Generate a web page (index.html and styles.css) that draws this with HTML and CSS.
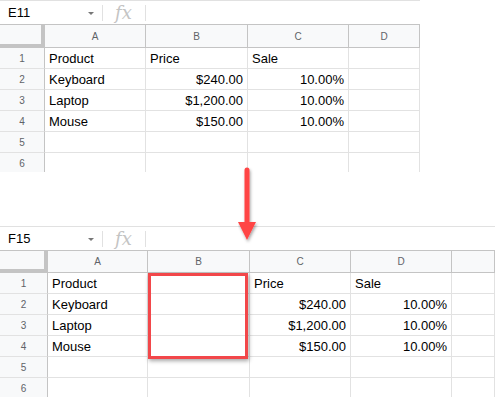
FILE: index.html
```html
<!DOCTYPE html>
<html lang="en">
<head>
    <meta charset="UTF-8">
    <meta name="viewport" content="width=device-width, initial-scale=1.0">
    <title>Insert column in Google Sheets</title>
    <link rel="stylesheet" href="styles.css">
</head>
<body>
<div class="page">
    <!-- before -->
    <div class="sheet sheet-before">
        <div class="formula-bar">
            <div class="name-box"><span>E11</span><span class="caret"></span></div>
            <div class="fx">fx</div>
            <div class="formula-input"></div>
        </div>
        <div class="grid grid-before">
            <div class="corner"></div>
            <div class="col-head">A</div>
            <div class="col-head">B</div>
            <div class="col-head">C</div>
            <div class="col-head">D</div>

            <div class="row-head">1</div>
            <div class="cell">Product</div>
            <div class="cell">Price</div>
            <div class="cell">Sale</div>
            <div class="cell"></div>

            <div class="row-head">2</div>
            <div class="cell">Keyboard</div>
            <div class="cell num">$240.00</div>
            <div class="cell num">10.00%</div>
            <div class="cell"></div>

            <div class="row-head">3</div>
            <div class="cell">Laptop</div>
            <div class="cell num">$1,200.00</div>
            <div class="cell num">10.00%</div>
            <div class="cell"></div>

            <div class="row-head">4</div>
            <div class="cell">Mouse</div>
            <div class="cell num">$150.00</div>
            <div class="cell num">10.00%</div>
            <div class="cell"></div>

            <div class="row-head">5</div>
            <div class="cell"></div>
            <div class="cell"></div>
            <div class="cell"></div>
            <div class="cell"></div>

            <div class="row-head">6</div>
            <div class="cell"></div>
            <div class="cell"></div>
            <div class="cell"></div>
            <div class="cell"></div>
        </div>
    </div>

    <svg class="arrow" width="24" height="78" viewBox="0 0 24 78">
        <defs>
            <filter id="shadow" x="-50%" y="-20%" width="200%" height="150%">
                <feDropShadow dx="1" dy="2" stdDeviation="1.5" flood-color="#000" flood-opacity="0.35"/>
            </filter>
        </defs>
        <g filter="url(#shadow)">
            <line x1="9" y1="4" x2="9" y2="58" stroke="#ff4545" stroke-width="5" stroke-linecap="round"/>
            <polygon points="0,56 18,56 9,74" fill="#ff4545"/>
        </g>
    </svg>

    <!-- after -->
    <div class="sheet sheet-after">
        <div class="formula-bar">
            <div class="name-box"><span>F15</span><span class="caret"></span></div>
            <div class="fx">fx</div>
            <div class="formula-input"></div>
        </div>
        <div class="grid grid-after">
            <div class="corner"></div>
            <div class="col-head">A</div>
            <div class="col-head">B</div>
            <div class="col-head">C</div>
            <div class="col-head">D</div>
            <div class="col-head"></div>

            <div class="row-head">1</div>
            <div class="cell">Product</div>
            <div class="cell"></div>
            <div class="cell">Price</div>
            <div class="cell">Sale</div>
            <div class="cell"></div>

            <div class="row-head">2</div>
            <div class="cell">Keyboard</div>
            <div class="cell"></div>
            <div class="cell num">$240.00</div>
            <div class="cell num">10.00%</div>
            <div class="cell"></div>

            <div class="row-head">3</div>
            <div class="cell">Laptop</div>
            <div class="cell"></div>
            <div class="cell num">$1,200.00</div>
            <div class="cell num">10.00%</div>
            <div class="cell"></div>

            <div class="row-head">4</div>
            <div class="cell">Mouse</div>
            <div class="cell"></div>
            <div class="cell num">$150.00</div>
            <div class="cell num">10.00%</div>
            <div class="cell"></div>

            <div class="row-head">5</div>
            <div class="cell"></div>
            <div class="cell"></div>
            <div class="cell"></div>
            <div class="cell"></div>
            <div class="cell"></div>

            <div class="row-head">6</div>
            <div class="cell"></div>
            <div class="cell"></div>
            <div class="cell"></div>
            <div class="cell"></div>
            <div class="cell"></div>

            <div class="highlight"></div>
        </div>
    </div>
</div>
</body>
</html>
```

FILE: styles.css
```css
body {
    margin: 0;
    background: #fff;
    font-family: "Liberation Sans", Arial, sans-serif;
    color: #000;
}
.page {
    position: relative;
    width: 495px;
    height: 397px;
    overflow: hidden;
}
.sheet {
    overflow: hidden;
}
.sheet-before {
    width: 420px;
    height: 172px;
}
.sheet-after {
    width: 495px;
    margin-top: 54px;
}
.formula-bar {
    display: flex;
    align-items: center;
    height: 23px;
    border-top: 1px solid #e1e1e1;
}
.name-box {
    width: 103px;
    box-sizing: border-box;
    display: flex;
    align-items: center;
    justify-content: space-between;
    padding: 0 8px 0 8px;
    font-size: 13px;
    border-right: 1px solid #e1e1e1;
    height: 16px;
}
.caret {
    width: 0;
    height: 0;
    border-left: 3px solid transparent;
    border-right: 3px solid transparent;
    border-top: 3px solid #777;
    margin-top: 1px;
}
.fx {
    width: 43px;
    box-sizing: border-box;
    height: 16px;
    line-height: 16px;
    padding-left: 12px;
    font-family: "DejaVu Serif", "Liberation Serif", serif;
    font-style: italic;
    font-size: 18px;
    color: #c4c4c4;
    border-right: 1px solid #e1e1e1;
}
.formula-input {
    flex: 1;
}
.grid {
    position: relative;
    display: grid;
    border-top: 1px solid #c4c4c4;
}
.grid-before {
    grid-template-columns: 45px 101px 102px 101px 71px;
    grid-template-rows: 23px repeat(6, 21px);
}
.grid-after {
    grid-template-columns: 48px 100px 102px 101px 101px 43px;
    grid-template-rows: 22px repeat(6, 21px);
}
.corner {
    background: #f8f9fa;
    border-right: 4px solid #c4c4c4;
    border-bottom: 4px solid #c4c4c4;
}
.col-head {
    background: #f8f9fa;
    border-right: 1px solid #c4c4c4;
    border-bottom: 1px solid #c4c4c4;
    font-size: 10px;
    color: #5f6368;
    display: flex;
    align-items: center;
    justify-content: center;
}
.row-head {
    background: #f8f9fa;
    border-right: 1px solid #c4c4c4;
    border-bottom: 1px solid #e2e2e2;
    font-size: 10px;
    color: #5f6368;
    display: flex;
    align-items: center;
    justify-content: center;
    padding-top: 1px;
}
.cell {
    border-right: 1px solid #e2e2e2;
    border-bottom: 1px solid #e2e2e2;
    font-size: 13px;
    padding: 1px 4px 0;
    display: flex;
    align-items: center;
    white-space: nowrap;
}
.cell.num {
    justify-content: flex-end;
}
/* red frame over the new empty column B, rows 1-4 */
.highlight {
    position: absolute;
    grid-column: 3 / 4;
    grid-row: 2 / 6;
    top: 0;
    left: 0;
    right: 2px;
    bottom: -2px;
    border: 3px solid #f2474a;
    box-shadow: 1px 2px 4px rgba(0, 0, 0, 0.35);
}
.arrow {
    position: absolute;
    left: 238px;
    top: 166px;
}
```
